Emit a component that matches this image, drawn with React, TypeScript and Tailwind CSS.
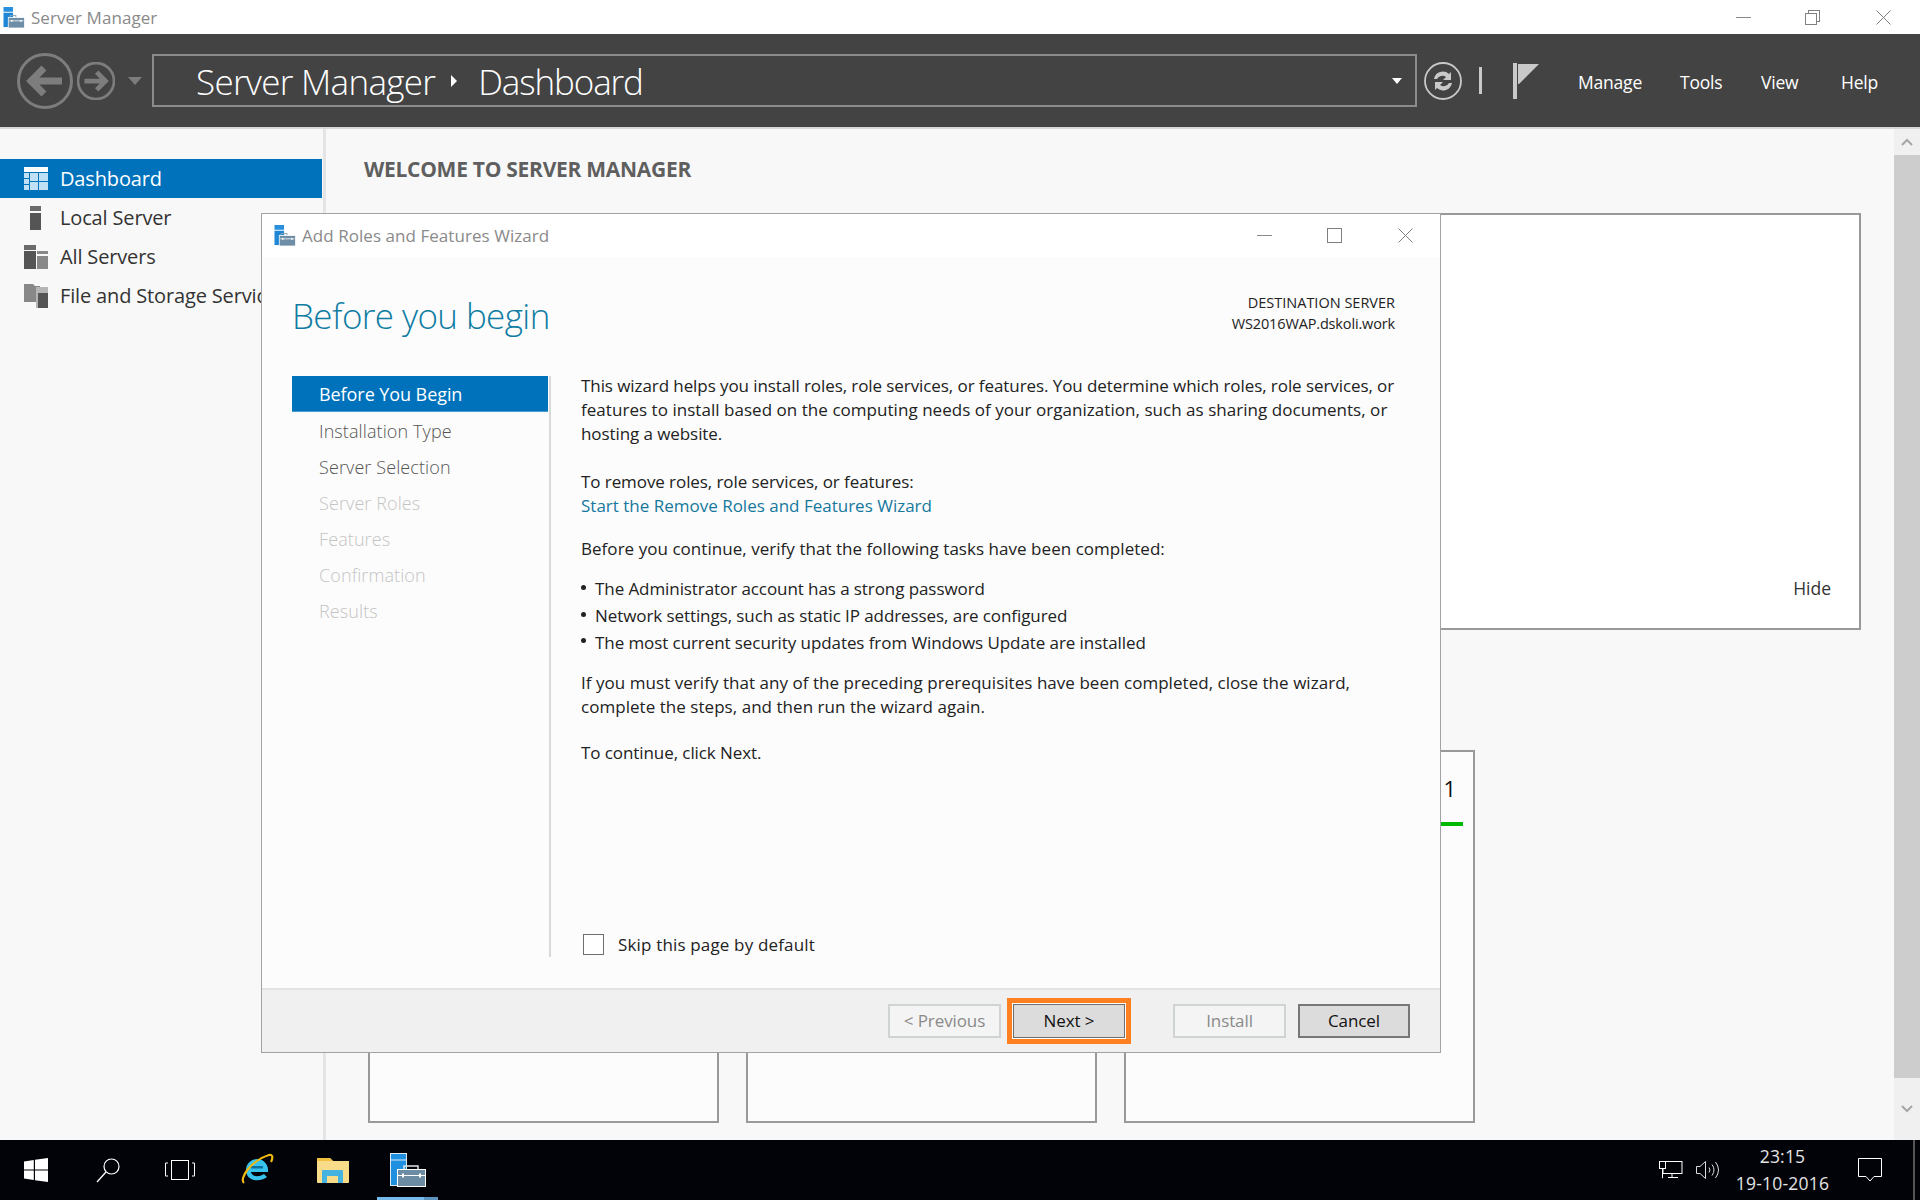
import React from 'react';

const sans = "font-['Open_Sans','Noto_Sans',sans-serif]";

const ServerManagerIcon: React.FC<{ className?: string }> = ({ className }) => (
  <svg viewBox="0 0 22 22" className={className}>
    <rect x="0" y="0" width="10" height="5" fill="#2a8fdc" />
    <rect x="0" y="6" width="10" height="15" fill="#1f86d6" />
    <rect x="7" y="9" width="6" height="3" fill="none" stroke="#8aa2b5" strokeWidth="1" />
    <rect x="5" y="11" width="17" height="11" fill="#6d8ea6" stroke="#fff" strokeWidth="0.8" />
    <path d="M6 14.5h15" stroke="#fff" strokeWidth="0.8" />
    <rect x="8" y="13.5" width="1.4" height="2" fill="#fff" />
    <rect x="17.5" y="13.5" width="1.4" height="2" fill="#fff" />
  </svg>
);

const TaskbarServerIcon = () => (
  <svg viewBox="0 0 36 34" className="h-[34px] w-[36px]">
    <rect x="0.5" y="0.5" width="16" height="32" fill="#1f8fe0" stroke="#dfeaf3" strokeWidth="1" />
    <path d="M1 7h15" stroke="#dfeaf3" strokeWidth="1" />
    <rect x="14" y="13" width="14" height="6" fill="none" stroke="#dfe5ea" strokeWidth="1.5" />
    <rect x="7.5" y="16.500" width="28" height="17" fill="#6c8ca3" stroke="#fff" strokeWidth="1" />
    <path d="M8 22.500h27" stroke="#fff" strokeWidth="1" />
    <rect x="12" y="20.500" width="2" height="4" fill="#fff" />
    <rect x="29" y="20.500" width="2" height="4" fill="#fff" />
  </svg>
);

const CloseGlyph = () => (
  <svg viewBox="0 0 15 15" className="h-[15px] w-[15px]">
    <path d="M0.5 0.5l14 14M14.5 0.5l-14 14" stroke="#7f7f7f" strokeWidth="1" fill="none" />
  </svg>
);

const CircleArrow: React.FC<{ size: string; flip?: boolean }> = ({ size, flip }) => (
  <svg viewBox="0 0 56 56" className={`${size} shrink-0`}>
    <circle cx="28" cy="28" r="26.5" fill="none" stroke="#7d7d7d" strokeWidth={flip ? 4 : 3} />
    <g transform={flip ? 'rotate(180 28 28)' : undefined}>
      <path d="M14 28H45M27 15L14 28l13 13" fill="none" stroke="#7d7d7d" strokeWidth="7" />
    </g>
  </svg>
);

const sidebarItems = [
  {
    label: 'Dashboard',
    active: true,
    icon: (
      <svg viewBox="0 0 24 23" className="h-[23px] w-[24px]">
        <rect width="24" height="5" fill="#fff" />
        <rect y="6" width="5" height="5" fill="#bfe0f5" /><rect x="6" y="6" width="8" height="8" fill="#bfe0f5" /><rect x="15" y="6" width="9" height="8" fill="#bfe0f5" />
        <rect y="12" width="5" height="5" fill="#bfe0f5" /><rect y="18" width="5" height="5" fill="#bfe0f5" /><rect x="6" y="15" width="8" height="8" fill="#bfe0f5" /><rect x="15" y="15" width="9" height="8" fill="#bfe0f5" />
      </svg>
    ),
  },
  {
    label: 'Local Server',
    icon: (
      <svg viewBox="0 0 24 24" className="h-[24px] w-[24px]">
        <rect x="6" y="0" width="11" height="5" fill="#6b6b6b" />
        <rect x="6" y="7" width="11" height="17" fill="#555" />
      </svg>
    ),
  },
  {
    label: 'All Servers',
    icon: (
      <svg viewBox="0 0 24 24" className="h-[24px] w-[24px]">
        <rect width="12" height="5" fill="#6b6b6b" /><rect y="6" width="12" height="18" fill="#555" />
        <rect x="13" y="6" width="11" height="3" fill="#888" /><rect x="13" y="11" width="11" height="13" fill="#888" />
      </svg>
    ),
  },
  {
    label: 'File and Storage Services',
    icon: (
      <svg viewBox="0 0 24 24" className="h-[24px] w-[24px]">
        <path d="M0 0h9l2 2h5v16H0z" fill="#888" />
        <path d="M12 3h12v21H12z" fill="#b5b5b5" />
        <path d="M14 9h10v15H14z" fill="#555" />
      </svg>
    ),
  },
];

const wizardSteps = [
  { label: 'Before You Begin', state: 'active' },
  { label: 'Installation Type', state: 'on' },
  { label: 'Server Selection', state: 'on' },
  { label: 'Server Roles', state: 'off' },
  { label: 'Features', state: 'off' },
  { label: 'Confirmation', state: 'off' },
  { label: 'Results', state: 'off' },
];

const bullets = [
  'The Administrator account has a strong password',
  'Network settings, such as static IP addresses, are configured',
  'The most current security updates from Windows Update are installed',
];

const Wizard = () => (
  <div className="absolute left-[261px] top-[213px] flex h-[840px] w-[1180px] flex-col border border-[#a3a3a3] bg-[#fcfcfc]">
    <div className="flex h-[43px] shrink-0 items-center bg-white pl-[12px]">
      <ServerManagerIcon className="h-[21px] w-[22px]" />
      <span className="ml-[6px] text-[17px] tracking-[0.05px] text-[#8a8a8a]">Add Roles and Features Wizard</span>
      <div className="ml-auto flex items-center pr-[27px]">
        <div className="mr-[55px] h-px w-[15px] bg-[#8a8a8a]" />
        <div className="mr-[56px] h-[15px] w-[15px] border border-[#7f7f7f]" />
        <CloseGlyph />
      </div>
    </div>

    <div className="flex h-[119px] shrink-0 items-start justify-between pl-[30px] pr-[45px]">
      <h1 className="mt-[34px] text-[35px] font-light leading-[50px] tracking-[-0.6px] text-[#0f7ca3]">Before you begin</h1>
      <div className="mt-[36px] text-right text-[14.5px] leading-[20.5px] text-[#222]">
        <div>DESTINATION SERVER</div>
        <div className="tracking-[-0.15px]">WS2016WAP.dskoli.work</div>
      </div>
    </div>

    <div className="flex h-[581px] shrink-0 pl-[30px]">
      <div className="w-[259px] shrink-0 border-r-2 border-[#d9d9d9] pr-[1px]">
        {wizardSteps.map((s) => (
          <div
            key={s.label}
            className={
              s.state === 'active'
                ? 'flex h-[36px] items-center border-b border-[#4a9bd6] bg-[#0072bc] pl-[27px] pt-[2px] text-[18px] tracking-[-0.07px] text-white'
                : s.state === 'on'
                ? 'flex h-[36px] items-center pl-[27px] pt-[2px] text-[18px] font-light tracking-[0.1px] text-[#555]'
                : 'flex h-[36px] items-center pl-[27px] pt-[2px] text-[18px] font-light tracking-[0.1px] text-[#c4c4c4]'
            }
          >
            {s.label}
          </div>
        ))}
      </div>

      <div className="flex flex-1 flex-col pl-[30px] text-[17px] leading-[24px] tracking-[-0.08px] text-[#222]">
        <p className="-mt-[2px] whitespace-nowrap">
          This wizard helps you install roles, role services, or features. You determine which roles, role services, or
          <br />
          <span className="tracking-[0.04px]">features to install based on the computing needs of your organization, such as sharing documents, or</span>
          <br />
          hosting a website.
        </p>
        <p className="mt-[24px]">To remove roles, role services, or features:</p>
        <a className="tracking-[0px] text-[#15789c]">Start the Remove Roles and Features Wizard</a>
        <p className="mt-[19px] tracking-[0.04px]">Before you continue, verify that the following tasks have been completed:</p>
        <ul className="mt-[15px]">
          {bullets.map((b) => (
            <li key={b} className="flex h-[26.7px] items-center">
              <span className="mb-[4px] mr-[9px] h-[5px] w-[5px] rounded-full bg-[#222]" />
              {b}
            </li>
          ))}
        </ul>
        <p className="mt-[15px] tracking-[0.04px]">
          If you must verify that any of the preceding prerequisites have been completed, close the wizard,
          <br />
          complete the steps, and then run the wizard again.
        </p>
        <p className="mt-[22px]">To continue, click Next.</p>
        <div className="mt-auto flex items-center pl-[2px]">
          <span className="h-[21px] w-[21px] border border-[#6f6f6f] bg-white" />
          <span className="ml-[14px] pt-[2px] tracking-[0.16px]">Skip this page by default</span>
        </div>
      </div>
    </div>

    <div className="mt-[31px] flex flex-1 items-start border-t-2 border-[#e3e3e3] bg-[#f0f0f0] pl-[626px] pt-[14px] text-[17px] tracking-[-0.1px]">
      <button className="flex h-[34px] w-[113px] items-center justify-center border-2 border-[#cfd3d3] bg-[#f4f4f4] text-[#8a8a8a]">&lt; Previous</button>
      <div className="ml-[6px] -mt-[6px] border-[5px] border-[#ff8020] bg-white p-px">
        <button className="flex h-[34px] w-[112px] items-center justify-center border border-[#6e6e6e] bg-[#dcdcdc] text-[#111]">Next &gt;</button>
      </div>
      <button className="ml-[42px] flex h-[34px] w-[113px] items-center justify-center border-2 border-[#cfd3d3] bg-[#f4f4f4] text-[#8a8a8a]">Install</button>
      <button className="ml-[12px] flex h-[34px] w-[112px] items-center justify-center border-2 border-[#777] bg-[#dcdcdc] text-[#111]">Cancel</button>
    </div>
  </div>
);

const Taskbar = () => (
  <div className="flex h-[60px] shrink-0 items-center bg-[#020308] text-white">
    <svg viewBox="0 0 24 24" className="ml-[24px] h-[24px] w-[24px]">
      <path d="M0 3.4l9.8-1.4v9.4H0zM11 1.8L24 0v11.4H11zM0 12.6h9.8V22L0 20.6zM11 12.6h13V24l-13-1.8z" fill="#fff" />
    </svg>
    <svg viewBox="0 0 24 25" className="ml-[48px] h-[25px] w-[24px]">
      <circle cx="15.5" cy="8.5" r="7.5" fill="none" stroke="#fff" strokeWidth="1.2" />
      <path d="M10 14L1 24" stroke="#fff" strokeWidth="1.3" />
    </svg>
    <svg viewBox="0 0 30 20" className="ml-[45px] h-[20px] w-[30px]">
      <rect x="6.5" y="0.5" width="17" height="19" fill="none" stroke="#fff" strokeWidth="1" />
      <path d="M3 3H0.5v13H3M27 3h2.5v13H27" fill="none" stroke="#fff" strokeWidth="1" />
    </svg>
    <svg viewBox="0 0 34 34" className="ml-[45px] h-[34px] w-[34px]">
      <path d="M6 17a11 11 0 0 1 22 0v2H11c.6 4 6.6 6 13 2l3 3c-8 6-21 4-21-7z" fill="#36c3ee" />
      <rect x="11" y="13" width="12" height="2.5" fill="#0d6f9a" />
      <path d="M4 30C-1 26 10 8 29 2c4-1 4 3 2 7" fill="none" stroke="#f0b90f" strokeWidth="2.2" />
    </svg>
    <svg viewBox="0 0 32 26" className="ml-[43px] h-[26px] w-[32px]">
      <path d="M0 2a1 1 0 0 1 1-1h12l3 3h16v21a1 1 0 0 1-1 1H1a1 1 0 0 1-1-1z" fill="#f8dc8a" />
      <path d="M0 1h13l3 3H0z" fill="#f0c040" />
      <path d="M5 26V14a1 1 0 0 1 1-1h19a1 1 0 0 1 1 1v12h-5v-7H10v7z" fill="#45b3e0" />
    </svg>
    <div className="relative ml-[28px] flex h-[60px] w-[61px] items-center justify-center">
      <TaskbarServerIcon />
      <div className="absolute bottom-0 left-0 h-[3px] w-[47px] bg-[#76b9ed]" />
      <div className="absolute bottom-0 right-0 h-[3px] w-[14px] bg-[#5d93bf]" />
    </div>

    <div className="ml-auto flex items-center">
      <svg viewBox="0 0 24 20" className="h-[20px] w-[24px]">
        <rect x="4" y="1.5" width="19" height="12" fill="none" stroke="#fff" strokeWidth="1" />
        <rect x="0.5" y="1.5" width="6" height="7" fill="#020308" stroke="#fff" strokeWidth="1" />
        <path d="M3.5 8.5V18M3.5 18H4M9 17.5h10M13 14v3" stroke="#fff" strokeWidth="1" fill="none" />
      </svg>
      <svg viewBox="0 0 23 20" className="ml-[13px] h-[20px] w-[23px]">
        <path d="M0.5 6.5H4L9.5 1.5V18.5L4 13.5H0.5z" fill="none" stroke="#ddd" strokeWidth="1" />
        <path d="M13 7.5q2 2.5 0 5M16 4.5q4 5.500 0 11M19.500 2q6 8 0 16" fill="none" stroke="#ddd" strokeWidth="1" />
      </svg>
      <div className="ml-[12px] w-[103px] whitespace-nowrap text-center text-[17.5px] leading-[27px] tracking-[0.2px] text-[#e4e4e4]">
        <div>23:15</div>
        <div>19-10-2016</div>
      </div>
      <svg viewBox="0 0 24 24" className="ml-[24px] h-[24px] w-[24px]">
        <path d="M0.5 0.500h23v18H16l-4 4.500-4-4.500H0.500z" fill="none" stroke="#fff" strokeWidth="1" />
      </svg>
      <div className="ml-[31px] h-[60px] w-[2px] bg-[#555]" />
      <div className="w-[5px]" />
    </div>
  </div>
);

export default function App() {
  return (
    <div className={`relative flex h-[1200px] w-[1920px] flex-col overflow-hidden bg-[#f8f8f8] ${sans}`}>
      {/* window title */}
      <div className="flex h-[34px] shrink-0 items-center bg-white pl-[3px]">
        <ServerManagerIcon className="h-[21px] w-[22px]" />
        <span className="ml-[6px] pt-[2px] text-[17px] tracking-[0.05px] text-[#8a8a8a]">Server Manager</span>
        <div className="ml-auto flex items-center pr-[29px]">
          <div className="mr-[54px] h-px w-[15px] bg-[#8a8a8a]" />
          <div className="relative mr-[56px] h-[15px] w-[15px]">
            <div className="absolute right-0 top-0 h-[12px] w-[12px] border border-[#7f7f7f]" />
            <div className="absolute bottom-0 left-0 h-[12px] w-[12px] border border-[#7f7f7f] bg-white" />
          </div>
          <CloseGlyph />
        </div>
      </div>

      {/* breadcrumb bar */}
      <div className="flex h-[95px] shrink-0 items-center border-b-2 border-[#d8d8d8] bg-[#434343]">
        <div className="ml-[17px] flex items-center gap-[4px]">
          <CircleArrow size="h-[56px] w-[56px]" />
          <CircleArrow size="h-[38px] w-[38px]" flip />
          <div className="ml-[9px] h-0 w-0 border-x-[7px] border-t-[8px] border-x-transparent border-t-[#7d7d7d]" />
        </div>
        <div className="ml-[10px] flex h-[53px] w-[1265px] items-center border-2 border-[#8c8c8c] pl-[42px] pr-[13px] text-[35px] font-light tracking-[-0.7px] text-white">
          <span className="pt-[4px]">Server Manager</span>
          <span className="ml-[16px] h-0 w-0 border-y-[6px] border-l-[6px] border-y-transparent border-l-white" />
          <span className="ml-[21px] pt-[4px] tracking-[-1.1px]">Dashboard</span>
          <span className="ml-auto h-0 w-0 border-x-[5px] border-t-[6px] border-x-transparent border-t-white" />
        </div>
        <svg viewBox="0 0 38 38" className="ml-[7px] h-[38px] w-[38px]">
          <circle cx="19" cy="19" r="18" fill="none" stroke="#c9c9c9" strokeWidth="1.8" />
          <path d="M10 17a9 9 0 0 1 15-5l2-2v8h-8l3-3a6 6 0 0 0-9 2z" fill="#c9c9c9" />
          <path d="M28 21a9 9 0 0 1-15 5l-2 2v-8h8l-3 3a6 6 0 0 0 9-2z" fill="#c9c9c9" />
        </svg>
        <div className="ml-[17px] h-[27px] w-[3px] bg-[#c9c9c9]" />
        <svg viewBox="0 0 26 36" className="ml-[31px] h-[36px] w-[26px]">
          <rect x="0" y="0" width="4" height="36" fill="#c9c9c9" />
          <path d="M5 1h21L6 21H5z" fill="#c9c9c9" />
        </svg>
        <div className="ml-[39px] mt-[3px] flex text-[17.5px] tracking-[-0.2px] text-white">
          <span className="w-[102px]">Manage</span>
          <span className="w-[81px]">Tools</span>
          <span className="w-[80px]">View</span>
          <span>Help</span>
        </div>
      </div>

      <div className="flex min-h-0 flex-1">
        {/* sidebar */}
        <div className="w-[326px] shrink-0 border-r-[3px] border-[#e4e4e4] pt-[30px]">
          {sidebarItems.map((item) => (
            <div
              key={item.label}
              className={`flex h-[39px] items-center pl-[24px] text-[20px] tracking-[-0.15px] ${item.active ? 'mr-[1px] bg-[#0072bc] text-white' : 'text-[#333]'}`}
            >
              <span className="flex h-[24px] w-[24px] items-center">{item.icon}</span>
              <span className="ml-[12px] whitespace-nowrap pt-[1px]">{item.label}</span>
            </div>
          ))}
        </div>

        {/* content */}
        <div className="flex min-w-0 flex-1 flex-col pl-[38px] pr-[33px]">
          <h2 className="mt-[27px] text-[21px] font-bold leading-[26px] tracking-[-0.28px] text-[#5f5f5f]">WELCOME TO SERVER MANAGER</h2>
          <div className="mt-[31px] flex h-[417px] flex-col items-end justify-end border-2 border-[#999] bg-white pb-[27px] pr-[28px]">
            <span className="text-[17.5px] text-[#333]">Hide</span>
          </div>
          <div className="ml-[4px] mt-[120px] flex gap-[27px]">
            <div className="h-[373px] w-[351px] border-2 border-[#999] bg-[#fcfcfc]" />
            <div className="h-[373px] w-[351px] border-2 border-[#999] bg-[#fcfcfc]" />
            <div className="flex h-[373px] w-[351px] flex-col items-end border-2 border-[#999] bg-[#fcfcfc] pr-[10px] pt-[21px]">
              <span className="mr-[7px] text-[22px] leading-[30px] text-[#111]">1</span>
              <div className="mt-[19px] h-[4px] w-[30px] bg-[#00b900]" />
            </div>
          </div>
        </div>

        {/* scrollbar */}
        <div className="flex w-[26px] shrink-0 flex-col bg-[#f0f0f0]">
          <div className="flex h-[26px] items-center justify-center">
            <svg viewBox="0 0 12 8" className="h-[8px] w-[12px]"><path d="M1 7l5-5 5 5" fill="none" stroke="#a6a6a6" strokeWidth="2" /></svg>
          </div>
          <div className="h-[923px] bg-[#cdcdcd]" />
          <div className="flex flex-1 items-center justify-center">
            <svg viewBox="0 0 12 8" className="h-[8px] w-[12px]"><path d="M1 1l5 5 5-5" fill="none" stroke="#a6a6a6" strokeWidth="2" /></svg>
          </div>
        </div>
      </div>

      <Taskbar />
      <Wizard />
    </div>
  );
}
